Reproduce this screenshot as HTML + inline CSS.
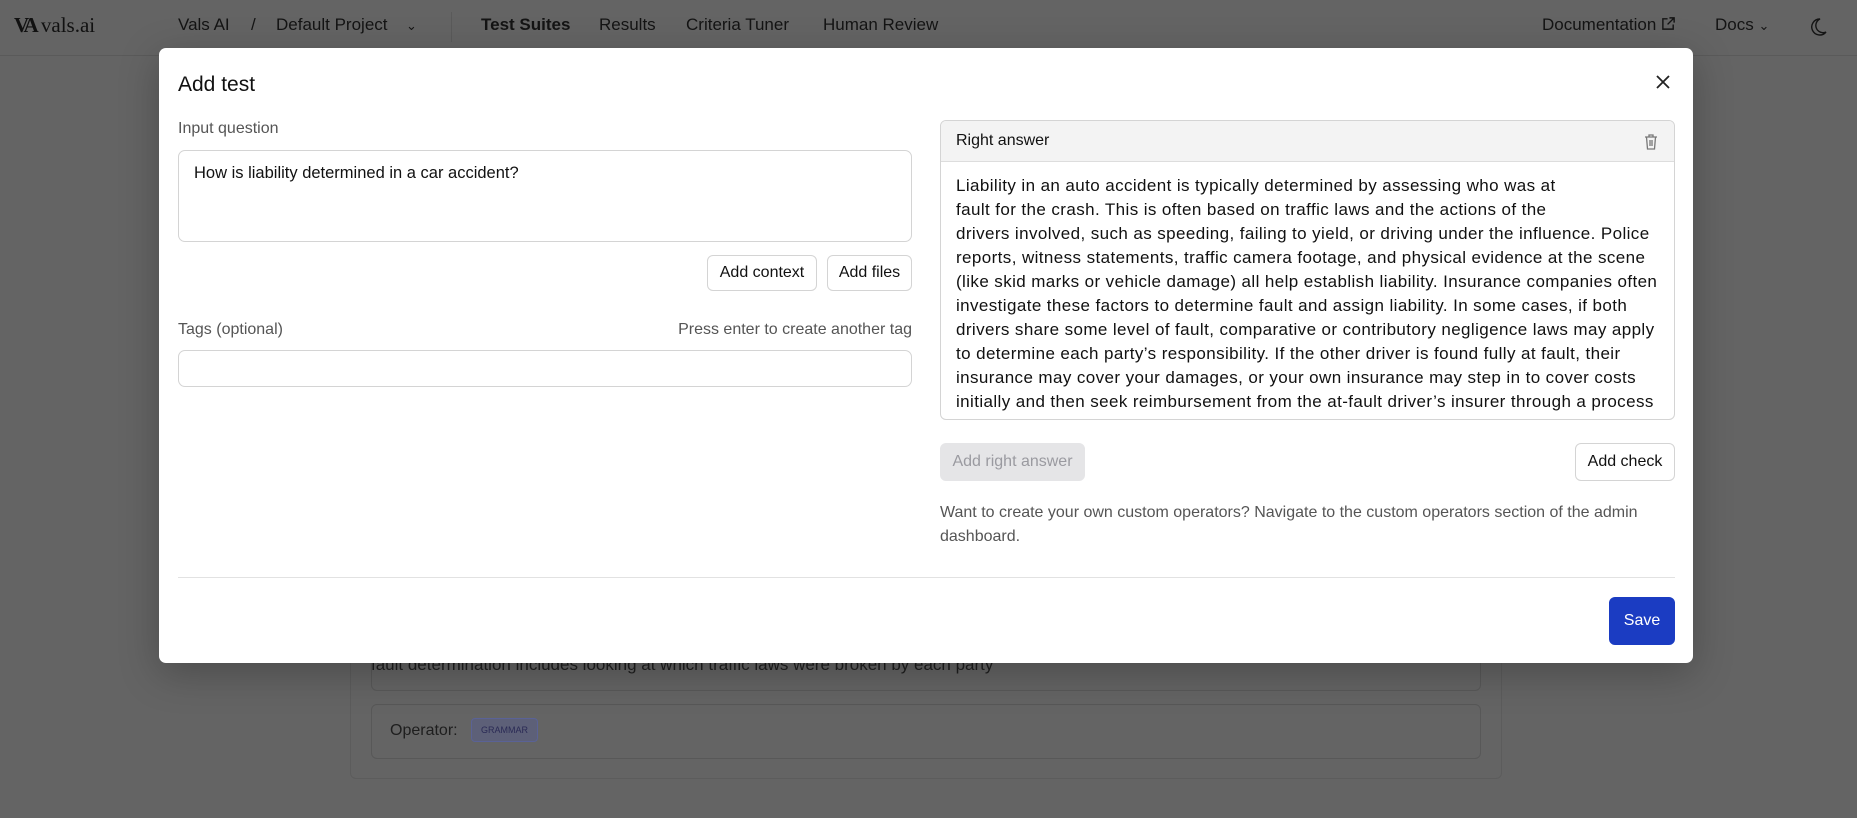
<!DOCTYPE html>
<html><head><meta charset="utf-8"><style>
*{box-sizing:border-box;margin:0;padding:0}
body{width:1857px;height:818px;overflow:hidden;background:#646464;font-family:"Liberation Sans",sans-serif;color:#1a1a1a;position:relative}
.nav{position:absolute;left:0;top:0;width:1857px;height:56px;border-bottom:1px solid #5a5a5a;font-size:17px;color:#141414}
.nav span{position:absolute;top:15px;white-space:nowrap}
.bg{position:absolute;left:350px;top:560px;width:1152px;height:219px;border:1px solid #5c5c5c;border-radius:6px;background:#646464}
.bx{position:absolute;left:20px;width:1110px;border:1px solid #585858;border-radius:6px}
.modal{position:absolute;left:159px;top:48px;width:1534px;height:615px;background:#fff;border-radius:7px;box-shadow:0 10px 40px rgba(0,0,0,.25)}
.a{position:absolute;white-space:nowrap}
.lbl{font-size:16px;color:#555}
.btn{position:absolute;border:1px solid #d4d4d4;border-radius:6px;background:#fff;font-size:16px;display:flex;align-items:center;justify-content:center;color:#111}
.inp{position:absolute;border:1px solid #d4d4d4;border-radius:7px}
</style></head><body>
<div class="nav">
<span style="left:14px;font-family:'Liberation Serif',serif;font-size:21px;top:13px;color:#111"><b style="letter-spacing:-3px">VA</b> vals.ai</span>
<span style="left:178px">Vals AI</span>
<span style="left:251px">/</span>
<span style="left:276px">Default Project</span>
<span style="left:406px;font-size:13px;top:18px">&#8964;</span>
<div style="position:absolute;left:451px;top:12px;width:1px;height:30px;background:#5a5a5a"></div>
<span style="left:481px;font-weight:bold">Test Suites</span>
<span style="left:599px">Results</span>
<span style="left:686px">Criteria Tuner</span>
<span style="left:823px">Human Review</span>
<span style="left:1542px">Documentation <svg width="15" height="15" viewBox="0 0 16 16" style="vertical-align:-1px" fill="none" stroke="#141414" stroke-width="1.5"><path d="M13 9v5H2V3h5M9 2h5v5M14 2L7 9"/></svg></span>
<span style="left:1715px">Docs <span style="position:static;font-size:13px">&#8964;</span></span>
<svg style="position:absolute;left:1810px;top:17px" width="18" height="20" viewBox="0 0 18 20" fill="none" stroke="#141414" stroke-width="1.4"><path d="M10 2a8 8 0 1 0 6 13A7 7 0 0 1 10 2z"/></svg>
</div>
<div class="bg">
<div class="bx" style="top:-20px;height:150px"></div>
<div class="a" style="left:20px;top:94px;font-size:17px;color:#1e1e1e">fault determination includes looking at which traffic laws were broken by each party</div>
<div class="bx" style="top:143px;height:55px"><span class="a" style="left:18px;top:17px;font-size:16px;color:#1e1e1e">Operator:</span><span class="a" style="left:99px;top:13px;border:1px solid #5a6296;background:#5d6078;border-radius:4px;font-size:9px;padding:6px 9px;color:#2a2a55">GRAMMAR</span></div>
</div>
<div class="modal">
<div class="a" style="left:19px;top:25px;font-size:21px;color:#111">Add test</div>
<svg class="a" style="left:1496px;top:26px" width="16" height="16" viewBox="0 0 16 16" stroke="#222" stroke-width="1.8"><path d="M2 2l12 12M14 2L2 14"/></svg>
<div class="a lbl" style="left:19px;top:72px">Input question</div>
<div class="inp" style="left:19px;top:102px;width:734px;height:92px"><span class="a" style="left:15px;top:13px;font-size:16.5px;color:#111">How is liability determined in a car accident?</span></div>
<div class="btn" style="left:548px;top:207px;width:110px;height:36px">Add context</div>
<div class="btn" style="left:668px;top:207px;width:85px;height:36px">Add files</div>
<div class="a lbl" style="left:19px;top:273px">Tags (optional)</div>
<div class="a lbl" style="right:781px;top:273px">Press enter to create another tag</div>
<div class="inp" style="left:19px;top:302px;width:734px;height:37px"></div>
<div class="inp" style="left:781px;top:72px;width:735px;height:300px;overflow:hidden;border-radius:6px">
<div style="height:41px;background:#f3f3f3;border-bottom:1px solid #ddd;font-size:16px;padding:11px 15px;color:#111">Right answer
<svg style="position:absolute;right:15px;top:12px" width="16" height="18" viewBox="0 0 16 18" fill="none" stroke="#777" stroke-width="1.3"><path d="M2 4h12M6 4V2h4v2M3.5 4l1 12h7l1-12M7 7v6M9 7v6"/></svg></div>
<div style="padding:12px 15px;font-size:17px;line-height:24px;color:#111;white-space:nowrap;letter-spacing:0.4px">Liability in an auto accident is typically determined by assessing who was at<br>fault for the crash. This is often based on traffic laws and the actions of the<br>drivers involved, such as speeding, failing to yield, or driving under the influence. Police<br>reports, witness statements, traffic camera footage, and physical evidence at the scene<br>(like skid marks or vehicle damage) all help establish liability. Insurance companies often<br>investigate these factors to determine fault and assign liability. In some cases, if both<br>drivers share some level of fault, comparative or contributory negligence laws may apply<br>to determine each party’s responsibility. If the other driver is found fully at fault, their<br>insurance may cover your damages, or your own insurance may step in to cover costs<br>initially and then seek reimbursement from the at-fault driver’s insurer through a process<br>called subrogation. Additionally, if injuries are involved, liability can also extend to cover</div>
</div>
<div class="btn" style="left:781px;top:395px;width:145px;height:38px;background:#e5e5e7;border-color:#e5e5e7;color:#9a9aa0">Add right answer</div>
<div class="btn" style="left:1416px;top:395px;width:100px;height:38px">Add check</div>
<div class="a" style="left:781px;top:453px;font-size:16px;line-height:24px;color:#555;white-space:normal;width:735px">Want to create your own custom operators? Navigate to the custom operators section of the admin dashboard.</div>
<div class="a" style="left:19px;top:529px;width:1497px;height:1px;background:#e2e2e2"></div>
<div class="btn" style="left:1450px;top:549px;width:66px;height:48px;background:#1b3cc2;border-color:#1b3cc2;color:#fff">Save</div>
</div>
</body></html>
